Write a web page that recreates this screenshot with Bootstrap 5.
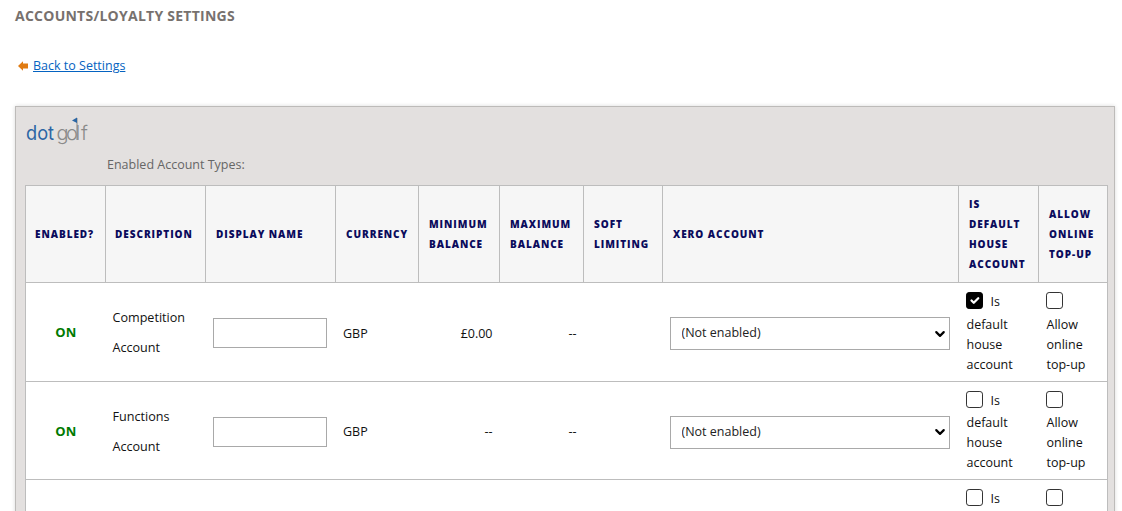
<!DOCTYPE html>
<html lang="en">
<head>
<meta charset="utf-8">
<title>Accounts/Loyalty Settings</title>
<link href="https://cdn.jsdelivr.net/npm/bootstrap@5.3.0/dist/css/bootstrap.min.css" rel="stylesheet">
<style>
html, body { height: 511px; overflow: hidden; }
body { font-family: "Open Sans", "Liberation Sans", sans-serif; font-size: 12.5px; color: #111; background: #fff; padding: 0 7px 0 15px; }
.page-title { font-size: 14px; font-weight: 700; color: #77716e; margin: 0; padding-top: 7px; line-height: 17px; letter-spacing: .25px; }
.back-row { margin-top: 33px; height: 18px; line-height: 18px; gap: 5px; padding-left: 3px; }
.back-row a { color: #0563c1; }
.panel-box { margin-top: 31px; background: #e3e0df; border: 1px solid #bdbbb9; box-shadow: 0 0 4px rgba(0,0,0,.15); padding: 0 7px 0 9px; height: 600px; }
.logo-row { height: 43px; padding: 8px 0 0 1px; }
.types-label { color: #666; padding-left: 82px; height: 35px; line-height: 30px; margin: 0; }
.acct-table { table-layout: fixed; width: 1082px; border-collapse: collapse; background: #fff; margin: 0; }
.acct-table th, .acct-table td { border: 1px solid #bdbdbd; vertical-align: middle; }
.acct-table td { border-left: 0; border-right: 0; padding: 2px 7px 0; }
.acct-table td:first-child { border-left: 1px solid #bdbdbd; }
.acct-table td:last-child { border-right: 1px solid #bdbdbd; }
.acct-table th { background: #f6f6f6; color: #0b0b5c; font-size: 10px; font-weight: 800; letter-spacing: .95px; line-height: 20px; text-transform: uppercase; padding: 0 9px 0 10px; height: 97px; }
.acct-table th.tight-head { padding-left: 9px; }
.col-a { width: 80px; } .col-b { width: 100px; } .col-c { width: 130px; } .col-d { width: 83px; } .col-e { width: 81px; }
.col-f { width: 84px; } .col-g { width: 79px; } .col-h { width: 296px; } .col-i { width: 80px; } .col-j { width: 69px; }
.on-label { color: #007a00; font-weight: 700; font-size: 13px; text-align: center; }
.acct-table td.desc-cell { line-height: 30px; font-size: 12.6px; padding-left: 7px; padding-right: 14px; }
.name-input { width: 114px; height: 30px; border: 1px solid #a9a9a9; border-radius: 0; padding: 0 8px; font-size: 13px; }
.xero-select { width: 280px; height: 33px; border: 1px solid #a9a9a9; border-radius: 0; padding: 0 28px 0 11px; font-family: inherit; font-size: 12.5px; color: #222; background-position: right 3px center; background-size: 12px 10px; --bs-form-select-bg-img: url("data:image/svg+xml,%3csvg xmlns='http://www.w3.org/2000/svg' viewBox='0 0 16 16'%3e%3cpath fill='none' stroke='%23000' stroke-linecap='round' stroke-linejoin='round' stroke-width='3.500' d='m2 5 6 6 6-6'/%3e%3c/svg%3e"); }
.acct-table td.num-cell { text-align: right; padding-top: 4px; }
.acct-table td.currency-cell { padding-left: 7.5px; padding-top: 4px; }
.acct-table td.select-cell { padding-top: 3px; }
.acct-table td.check-cell { line-height: 20px; padding: 9px 8px 6px 8px; }
.row-one, .row-two { height: 98px; }
.row-one { height: 99px; }
.tick-box { width: 17px; height: 17px; margin: 0 5px 0 0; border: 1.5px solid #333; border-radius: 4px; vertical-align: -3px; float: none; }
.tick-box:checked { background-color: #000; border-color: #000; --bs-form-check-bg-image: url("data:image/svg+xml,%3csvg xmlns='http://www.w3.org/2000/svg' viewBox='0 0 20 20'%3e%3cpath fill='none' stroke='%23fff' stroke-linecap='round' stroke-linejoin='round' stroke-width='4' d='m4 10.500 4 4 8-9'/%3e%3c/svg%3e"); }
.tick-box + span { padding-left: 3px; }
.tick-line { display: block; height: 22px; white-space: nowrap; margin-left: -1px; }
.row-one .tick-line { height: 23px; }
.logo-svg { display: block; overflow: visible; }
.logo-dot { font: 400 20px Inter, "Open Sans", sans-serif; fill: #2c66a4; }
.logo-golf { font: 300 20px Inter, "Open Sans", sans-serif; fill: #8a8a8a; }
</style>
</head>
<body>
<h1 class="page-title text-uppercase">Accounts/Loyalty Settings</h1>
<div class="back-row d-flex align-items-center">
  <svg width="10" height="10" viewBox="0 0 10 10" aria-hidden="true"><path d="M0 5 5 .3V2.500h5v5H5v2.200z" fill="#e07b12"/></svg>
  <a href="#">Back to Settings</a>
</div>
<div class="panel-box">
  <div class="logo-row">
    <svg class="logo-svg" width="62" height="32" viewBox="0 0 62 32" role="img" aria-label="dotgolf">
      <text x="0" y="25" class="logo-dot" textLength="28" lengthAdjust="spacingAndGlyphs">dot</text>
      <text x="30.500 40 49.500 55" y="25" class="logo-golf">golf</text>
      <path d="M51 3V25" stroke="#8a8a8a" stroke-width="1" fill="none"/>
      <path d="M51 2.500V8L46 5.500z" fill="#2c66a4"/>
    </svg>
  </div>
  <p class="types-label">Enabled Account Types:</p>
  <table class="acct-table">
    <colgroup><col class="col-a"><col class="col-b"><col class="col-c"><col class="col-d"><col class="col-e"><col class="col-f"><col class="col-g"><col class="col-h"><col class="col-i"><col class="col-j"></colgroup>
    <thead>
      <tr><th class="tight-head">Enabled?</th><th class="tight-head">Description</th><th>Display Name</th><th>Currency</th><th>Minimum Balance</th><th>Maximum Balance</th><th>Soft Limiting</th><th>Xero Account</th><th>Is Default House Account</th><th>Allow Online Top-Up</th></tr>
    </thead>
    <tbody>
      <tr class="row-one">
        <td class="on-label">ON</td>
        <td class="desc-cell">Competition Account</td>
        <td><input class="form-control name-input" type="text" aria-label="Display name"></td>
        <td class="currency-cell">GBP</td>
        <td class="num-cell">£0.00</td>
        <td class="num-cell">--</td>
        <td></td>
        <td class="select-cell"><select class="form-select xero-select" aria-label="Xero account"><option>(Not enabled)</option></select></td>
        <td class="check-cell"><span class="tick-line"><input class="form-check-input tick-box" type="checkbox" checked aria-label="Is default"><span>Is</span></span>default house account</td>
        <td class="check-cell"><span class="tick-line"><input class="form-check-input tick-box" type="checkbox" aria-label="Allow"></span>Allow online top-up</td>
      </tr>
      <tr class="row-two">
        <td class="on-label">ON</td>
        <td class="desc-cell">Functions Account</td>
        <td><input class="form-control name-input" type="text" aria-label="Display name"></td>
        <td class="currency-cell">GBP</td>
        <td class="num-cell">--</td>
        <td class="num-cell">--</td>
        <td></td>
        <td class="select-cell"><select class="form-select xero-select" aria-label="Xero account"><option>(Not enabled)</option></select></td>
        <td class="check-cell"><span class="tick-line"><input class="form-check-input tick-box" type="checkbox" aria-label="Is default"><span>Is</span></span>default house account</td>
        <td class="check-cell"><span class="tick-line"><input class="form-check-input tick-box" type="checkbox" aria-label="Allow"></span>Allow online top-up</td>
      </tr>
      <tr class="row-two">
        <td class="on-label">ON</td>
        <td class="desc-cell">Vouchers</td>
        <td><input class="form-control name-input" type="text" aria-label="Display name"></td>
        <td class="currency-cell">GBP</td>
        <td class="num-cell">--</td>
        <td class="num-cell">--</td>
        <td></td>
        <td class="select-cell"><select class="form-select xero-select" aria-label="Xero account"><option>(Not enabled)</option></select></td>
        <td class="check-cell"><span class="tick-line"><input class="form-check-input tick-box" type="checkbox" aria-label="Is default"><span>Is</span></span>default house account</td>
        <td class="check-cell"><span class="tick-line"><input class="form-check-input tick-box" type="checkbox" aria-label="Allow"></span>Allow online top-up</td>
      </tr>
    </tbody>
  </table>
</div>
<script src="https://cdn.jsdelivr.net/npm/bootstrap@5.3.0/dist/js/bootstrap.bundle.min.js"></script>
</body>
</html>
